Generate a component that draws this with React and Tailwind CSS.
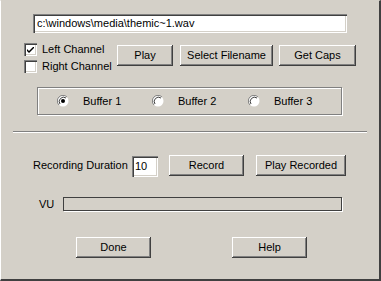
import React from "react";

const raised =
  "shadow-[inset_-1px_-1px_0_#404040,inset_1px_1px_0_#ffffff,inset_-2px_-2px_0_#808080]";
const sunken =
  "shadow-[inset_1px_1px_0_#808080,inset_2px_2px_0_#404040,inset_-1px_-1px_0_#ffffff,inset_-2px_-2px_0_#d4d0c8]";

const Button = ({ children, className = "" }) => (
  <div
    className={`h-[21px] flex items-center justify-center bg-[#d4d0c8] text-black ${raised} ${className}`}
  >
    {children}
  </div>
);

const Check = ({ checked, label, className = "" }) => (
  <div className={`flex items-center h-[13px] ${className}`}>
    <div className={`w-[13px] h-[13px] bg-white flex items-center justify-center ${sunken}`}>
      {checked && (
        <svg width="7" height="7" viewBox="0 0 7 7" className="mt-[1px]">
          <path d="M0 2 L0 4 L2 6 L7 1 L7 -1 L2 4 Z" fill="#000" />
        </svg>
      )}
    </div>
    <span className="ml-[5px]">{label}</span>
  </div>
);

const Radio = ({ checked, label, className = "" }) => (
  <div className={`flex items-center ${className}`}>
    <svg width="12" height="12" viewBox="0 0 12 12">
      <circle cx="6" cy="6" r="5.5" fill="#fff" />
      <path d="M10 2 A5.5 5.5 0 0 0 2 10" stroke="#808080" strokeWidth="1" fill="none" />
      <path d="M9 3 A4.3 4.3 0 0 0 3 9" stroke="#404040" strokeWidth="1" fill="none" />
      {checked && <circle cx="6" cy="6" r="2" fill="#000" />}
    </svg>
    <span className="ml-[14px]">{label}</span>
  </div>
);

export default function App() {
  return (
    <div
      className="w-[381px] h-[281px] bg-[#d4d0c8] text-[11px] leading-[13px] text-black border-l border-t border-l-white border-t-[#d4d0c8] border-r-2 border-b-2 border-r-[#404040] border-b-[#404040] overflow-hidden"
      style={{ fontFamily: '"Liberation Sans", Arial, sans-serif' }}
    >
      {/* file name */}
      <div className="flex mt-[13px] ml-[32px]">
        <div className={`w-[314px] h-[19px] bg-white flex items-center pl-[4px] ${sunken}`}>
          c:\windows\media\themic~1.wav
        </div>
      </div>

      {/* channels + buttons */}
      <div className="flex mt-[10px]">
        <div className="flex flex-col ml-[23px] w-[93px] gap-[4px]">
          <Check checked label="Left Channel" />
          <Check label="Right Channel" />
        </div>
        <div className="flex mt-[2px]">
          <Button className="w-[56px]">Play</Button>
          <Button className="w-[93px] ml-[7px]">Select Filename</Button>
          <Button className="w-[77px] ml-[6px]">Get Caps</Button>
        </div>
      </div>

      {/* buffers */}
      <div className="flex mt-[14px] ml-[36px]">
        <div className="w-[305px] h-[28px] border border-[#808080] shadow-[1px_1px_0_#ffffff,inset_1px_1px_0_#ffffff] flex items-center">
          <Radio checked label="Buffer 1" className="ml-[19px] w-[95px]" />
          <Radio label="Buffer 2" className="w-[96px]" />
          <Radio label="Buffer 3" />
        </div>
      </div>

      {/* separator */}
      <div className="ml-[12px] mt-[16px] w-[354px] h-[2px] border-t border-t-[#808080] border-b border-b-white" />

      {/* recording */}
      <div className="flex items-center mt-[21px] ml-[32px]">
        <span className="w-[99px]">Recording Duration</span>
        <div className={`w-[26px] h-[21px] bg-white flex items-center pl-[3px] mt-[2px] ${sunken}`}>10</div>
        <Button className="w-[75px] ml-[11px]">Record</Button>
        <Button className="w-[90px] ml-[12px]">Play Recorded</Button>
      </div>

      {/* VU */}
      <div className="flex items-center mt-[20px] ml-[38px]">
        <span className="w-[24px]">VU</span>
        <div className="w-[279px] h-[14px] border border-[#404040] shadow-[1px_1px_0_#ffffff]" />
      </div>

      {/* done / help */}
      <div className="flex mt-[26px] ml-[75px]">
        <Button className="w-[75px]">Done</Button>
        <Button className="w-[75px] ml-[81px]">Help</Button>
      </div>
    </div>
  );
}
